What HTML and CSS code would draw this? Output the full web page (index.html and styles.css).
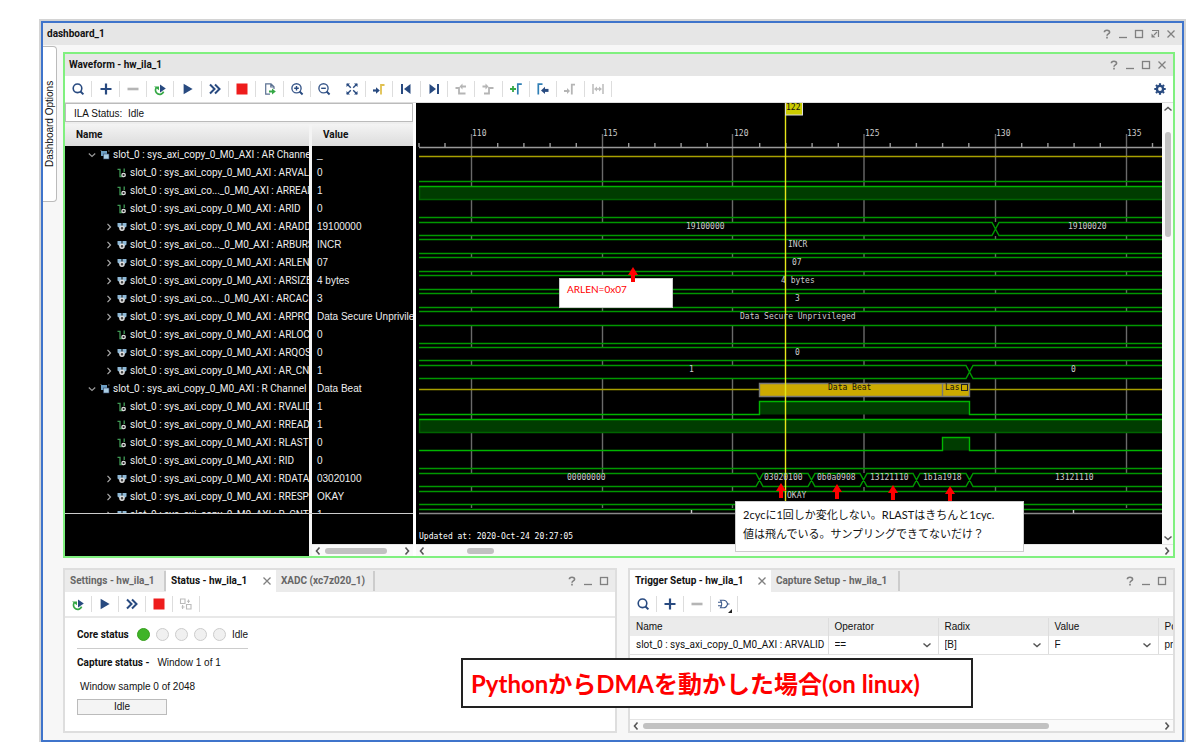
FILE: index.html
```html
<!DOCTYPE html>
<html lang="en">
<head>
<meta charset="utf-8">
<title>dashboard_1</title>
<link rel="stylesheet" href="styles.css">
</head>
<body>
<svg class="defs" aria-hidden="true">
  <symbol id="search" viewBox="0 0 14 14"><circle cx="6.5" cy="6.3" r="4.3" fill="none" stroke="#284a80" stroke-width="1.6"/><path d="M9.5 9.5L12.4 12.4" stroke="#284a80" stroke-width="2"/></symbol>
  <symbol id="plus" viewBox="0 0 14 14"><path d="M7 1.5V12.5M1.500 7H12.5" stroke="#284a80" stroke-width="2.2"/></symbol>
  <symbol id="minus" viewBox="0 0 14 14"><path d="M1.5 7H12.5" stroke="#b5b5b5" stroke-width="2.6"/></symbol>
  <symbol id="rerun" viewBox="0 0 14 14"><path d="M7 2.5V10.5L12.8 6.4z" fill="#284a80"/><path d="M3.4 5.5A4.2 4.2 0 1 0 10.6 9.600" fill="none" stroke="#35a845" stroke-width="1.7"/><path d="M1 4.4H6V8.2z" fill="#35a845"/></symbol>
  <symbol id="play" viewBox="0 0 14 14"><path d="M2.6 1.8V12.2L11.6 7z" fill="#284a80"/></symbol>
  <symbol id="forward" viewBox="0 0 14 14"><path d="M2 2.5L6.5 7L2 11.5M7 2.5L11.5 7L7 11.5" fill="none" stroke="#284a80" stroke-width="2"/></symbol>
  <symbol id="stop" viewBox="0 0 14 14"><rect x="1.5" y="1.5" width="11" height="11" fill="#ee1c1c"/></symbol>
  <symbol id="export" viewBox="0 0 14 14"><path d="M7 12.2H2.7V1.8H8L11 4.8V7M7.8 2V5H11" fill="none" stroke="#5b7192" stroke-width="1.2"/><path d="M6 9.5H9.5" stroke="#35a845" stroke-width="2"/><path d="M9 6.5L12.8 9.5L9 12.5z" fill="#35a845"/></symbol>
  <symbol id="zoomin" viewBox="0 0 14 14"><circle cx="6.5" cy="6.3" r="4.6" fill="none" stroke="#3c5a8c" stroke-width="1.4"/><path d="M9.6 9.5L12.6 12.5" stroke="#284a80" stroke-width="1.9"/><path d="M4.2 6.3H8.8M6.5 4V8.6" stroke="#284a80" stroke-width="1.4"/></symbol>
  <symbol id="zoomout" viewBox="0 0 14 14"><circle cx="6.5" cy="6.3" r="4.6" fill="none" stroke="#3c5a8c" stroke-width="1.4"/><path d="M9.6 9.5L12.6 12.5" stroke="#284a80" stroke-width="1.9"/><path d="M4.2 6.3H8.8" stroke="#284a80" stroke-width="1.4"/></symbol>
  <symbol id="fit" viewBox="0 0 14 14"><path d="M1.5 5V1.5H5zM9 1.5H12.5V5zM1.5 9V12.5H5zM12.5 9V12.5H9z" fill="#284a80"/><path d="M2 2L5.8 5.8M12 2L8.2 5.8M2 12L5.8 8.2M12 12L8.2 8.2" stroke="#284a80" stroke-width="1.4"/></symbol>
  <symbol id="gocursor" viewBox="0 0 14 14"><path d="M1 8.5H4.5" stroke="#284a80" stroke-width="2.2"/><path d="M4 5.2L7.8 8.5L4 11.8z" fill="#284a80"/><path d="M9 12.5V3H12.5" fill="none" stroke="#e0c04f" stroke-width="1.8"/></symbol>
  <symbol id="first" viewBox="0 0 14 14"><path d="M3 2V12" stroke="#284a80" stroke-width="2"/><path d="M11.500 2V12L5 7z" fill="#284a80"/></symbol>
  <symbol id="last" viewBox="0 0 14 14"><path d="M11 2V12" stroke="#284a80" stroke-width="2"/><path d="M2.500 2V12L9 7z" fill="#284a80"/></symbol>
  <symbol id="prevedge" viewBox="0 0 14 14"><path d="M1.5 6H5V11.5H11.5M7.5 4.5H12" fill="none" stroke="#b5b5b5" stroke-width="1.8"/><path d="M8.5 1.5V7.5L5.5 4.5z" fill="#b5b5b5"/></symbol>
  <symbol id="nextedge" viewBox="0 0 14 14"><path d="M3 11.5H8V6H12.5M1.5 4.5H5" fill="none" stroke="#b5b5b5" stroke-width="1.8"/><path d="M4.5 1.5V7.5L7.5 4.5z" fill="#b5b5b5"/></symbol>
  <symbol id="addmark" viewBox="0 0 14 14"><path d="M4 4V10M1 7H7" stroke="#35a845" stroke-width="1.8"/><path d="M8.8 12.5V2.2H12.8" fill="none" stroke="#2f7fb5" stroke-width="1.7"/></symbol>
  <symbol id="markback" viewBox="0 0 14 14"><path d="M2.3 12.5V2.2H6.5" fill="none" stroke="#2f7fb5" stroke-width="1.7"/><path d="M8.5 8.4H12.5" stroke="#284a80" stroke-width="3"/><path d="M9 4.8V12L5 8.4z" fill="#284a80"/></symbol>
  <symbol id="markfwd" viewBox="0 0 14 14"><path d="M1 9H4.5M8.8 12.5V2.7H12" fill="none" stroke="#b5b5b5" stroke-width="1.8"/><path d="M4 6V12L7 9z" fill="#b5b5b5"/></symbol>
  <symbol id="span" viewBox="0 0 14 14"><path d="M2 2V12M12 2V12M4 7H10" stroke="#bcbcbc" stroke-width="1.5"/><path d="M3 7L6 4.5V9.5zM11 7L8 4.5V9.5z" fill="#bcbcbc"/></symbol>
  <symbol id="gear" viewBox="0 0 14 14"><circle cx="7" cy="7" r="3.1" fill="none" stroke="#284a80" stroke-width="2.4"/><path d="M7 1.3V3M7 11V12.7M1.3 7H3M11 7H12.7M3 3L4.2 4.2M9.8 9.8L11 11M3 11L4.2 9.8M9.8 4.2L11 3" stroke="#284a80" stroke-width="2.2"/></symbol>
  <symbol id="swap" viewBox="0 0 14 14"><path d="M1.5 2H6V6.5H1.5zM7.5 7.5H12V12H7.5zM8 4.2H11M2.5 10H5.5M3.6 8V12M9.5 2.5V6" fill="none" stroke="#bbb" stroke-width="1.1"/></symbol>
  <symbol id="gate" viewBox="0 0 14 14"><path d="M3.5 3.2H6.5C9 3.2 10 5 10.6 7C10 9 9 10.8 6.5 10.8H3.5C5 8.5 5 5.5 3.5 3.2zM1 5.2H4M1 8.8H4M10.6 7H12.5" fill="none" stroke="#3c5a8c" stroke-width="1.1"/></symbol>
  <symbol id="help" viewBox="0 0 10 10"><path d="M2.4 3.3C2.4 .6 7.6 .6 7.6 3.2C7.6 5 5 4.8 5 6.7M5 7.8V9.4" fill="none" stroke="#808080" stroke-width="1.6"/></symbol>
  <symbol id="min" viewBox="0 0 10 10"><path d="M1 8.5H9" stroke="#808080" stroke-width="1.3"/></symbol>
  <symbol id="max" viewBox="0 0 10 10"><rect x="1.5" y="1.5" width="7" height="7" fill="none" stroke="#808080" stroke-width="1.3"/></symbol>
  <symbol id="float" viewBox="0 0 10 10"><path d="M2 1.5H8.5V8M7 3L4 6" fill="none" stroke="#808080" stroke-width="1.2"/><path d="M1.5 4.5V8.5H5.5z" fill="#808080"/></symbol>
  <symbol id="close" viewBox="0 0 10 10"><path d="M1.5 1.5L8.5 8.5M8.5 1.5L1.5 8.5" stroke="#808080" stroke-width="1.3"/></symbol>
  <symbol id="left" viewBox="0 0 10 10"><path d="M6.5 1.5L3.5 5L6.5 8.5" fill="none" stroke="#555" stroke-width="1.6"/></symbol>
  <symbol id="right" viewBox="0 0 10 10"><path d="M3.5 1.5L6.5 5L3.5 8.5" fill="none" stroke="#555" stroke-width="1.6"/></symbol>
  <symbol id="up" viewBox="0 0 10 10"><path d="M1.5 6.5L5 3.5L8.5 6.5" fill="none" stroke="#555" stroke-width="1.5"/></symbol>
  <symbol id="down" viewBox="0 0 10 10"><path d="M1.5 3.5L5 6.5L8.5 3.5" fill="none" stroke="#555" stroke-width="1.5"/></symbol>
  <symbol id="open" viewBox="0 0 10 10"><path d="M1.8 3.5L5 6.5L8.2 3.5" fill="none" stroke="#999" stroke-width="1.2"/></symbol>
  <symbol id="shut" viewBox="0 0 10 10"><path d="M3.5 1.8L6.5 5L3.5 8.2" fill="none" stroke="#aaa" stroke-width="1.2"/></symbol>
  <symbol id="group" viewBox="0 0 10 10"><rect x="1" y="1" width="6" height="5" fill="#6d9fc4"/><rect x="3.500" y="4" width="5.5" height="5" fill="#a9cde4" stroke="#346" stroke-width=".6"/><path d="M0 0H2M8 1H9.5" stroke="#999" stroke-width=".7"/></symbol>
  <symbol id="bit" viewBox="0 0 10 10"><path d="M.5 1.3H3V8.500H5M7.200 .5V4" fill="none" stroke="#3f9a55" stroke-width="1.3"/><circle cx="6.6" cy="7" r="1.7" fill="#222" stroke="#ddd" stroke-width="1.3"/></symbol>
  <symbol id="bus" viewBox="0 0 10 10"><path d="M.5 1H4.500V5L3 6.500L.5 4.500zM5.500 1H9.5V4.500L7 6.500L5.500 5z" fill="#8fb9d6"/><circle cx="5" cy="6.200" r="2" fill="#444" stroke="#ddd" stroke-width="1.5"/></symbol>
</svg>

<main class="dashboard">
  <header class="titlebar main-title">
    <h1>dashboard_1</h1>
    <div class="winbtns"><button aria-label="Help"><svg><use href="#help"/></svg></button><button aria-label="Minimize"><svg><use href="#min"/></svg></button><button aria-label="Maximize"><svg><use href="#max"/></svg></button><button aria-label="Float"><svg><use href="#float"/></svg></button><button aria-label="Close"><svg><use href="#close"/></svg></button></div>
  </header>
  <div class="workspace">
    <button class="side-tab">Dashboard Options</button>
    <div class="panels">
      <section class="panel wave-panel">
        <header class="titlebar">
          <h2>Waveform - hw_ila_1</h2>
          <div class="winbtns"><button aria-label="Help"><svg><use href="#help"/></svg></button><button aria-label="Minimize"><svg><use href="#min"/></svg></button><button aria-label="Maximize"><svg><use href="#max"/></svg></button><button aria-label="Close"><svg><use href="#close"/></svg></button></div>
        </header>
        <div class="toolbar">
          <div class="tools tools-wave">
            <button aria-label="Search"><svg><use href="#search"/></svg></button>
            <button aria-label="Add"><svg><use href="#plus"/></svg></button>
            <button aria-label="Remove"><svg><use href="#minus"/></svg></button>
            <button aria-label="Auto re-trigger"><svg><use href="#rerun"/></svg></button>
            <button aria-label="Run trigger"><svg><use href="#play"/></svg></button>
            <button aria-label="Run immediate"><svg><use href="#forward"/></svg></button>
            <button aria-label="Stop"><svg><use href="#stop"/></svg></button>
            <button aria-label="Export"><svg><use href="#export"/></svg></button>
            <button aria-label="Zoom in"><svg><use href="#zoomin"/></svg></button>
            <button class="nosep" aria-label="Zoom out"><svg><use href="#zoomout"/></svg></button>
            <button aria-label="Zoom fit"><svg><use href="#fit"/></svg></button>
            <button aria-label="Go to cursor"><svg><use href="#gocursor"/></svg></button>
            <button aria-label="First"><svg><use href="#first"/></svg></button>
            <button aria-label="Last"><svg><use href="#last"/></svg></button>
            <button aria-label="Previous transition"><svg><use href="#prevedge"/></svg></button>
            <button aria-label="Next transition"><svg><use href="#nextedge"/></svg></button>
            <button aria-label="Add marker"><svg><use href="#addmark"/></svg></button>
            <button aria-label="Previous marker"><svg><use href="#markback"/></svg></button>
            <button aria-label="Next marker"><svg><use href="#markfwd"/></svg></button>
            <button aria-label="Swap cursors"><svg><use href="#span"/></svg></button>
          </div>
          <button class="gear" aria-label="Settings"><svg><use href="#gear"/></svg></button>
        </div>
        <div class="viewer">
          <div class="signals">
            <div class="ila">ILA Status:&nbsp; Idle</div>
            <div class="tree">
              <table>
                <thead><tr><th class="cn">Name</th><th>Value</th></tr></thead>
                <tbody>
                  <tr><td class="cn l1"><svg><use href="#open"/></svg><svg><use href="#group"/></svg>slot_0 : sys_axi_copy_0_M0_AXI : AR Channel</td><td>_</td></tr>
                  <tr><td class="cn"><svg></svg><svg><use href="#bit"/></svg>slot_0 : sys_axi_copy_0_M0_AXI : ARVALID</td><td>0</td></tr>
                  <tr><td class="cn"><svg></svg><svg><use href="#bit"/></svg>slot_0 : sys_axi_co..._0_M0_AXI : ARREADY</td><td>1</td></tr>
                  <tr><td class="cn"><svg></svg><svg><use href="#bit"/></svg>slot_0 : sys_axi_copy_0_M0_AXI : ARID</td><td>0</td></tr>
                  <tr><td class="cn"><svg><use href="#shut"/></svg><svg><use href="#bus"/></svg>slot_0 : sys_axi_copy_0_M0_AXI : ARADDR</td><td>19100000</td></tr>
                  <tr><td class="cn"><svg><use href="#shut"/></svg><svg><use href="#bus"/></svg>slot_0 : sys_axi_co..._0_M0_AXI : ARBURST</td><td>INCR</td></tr>
                  <tr><td class="cn"><svg><use href="#shut"/></svg><svg><use href="#bus"/></svg>slot_0 : sys_axi_copy_0_M0_AXI : ARLEN</td><td>07</td></tr>
                  <tr><td class="cn"><svg><use href="#shut"/></svg><svg><use href="#bus"/></svg>slot_0 : sys_axi_copy_0_M0_AXI : ARSIZE</td><td>4 bytes</td></tr>
                  <tr><td class="cn"><svg><use href="#shut"/></svg><svg><use href="#bus"/></svg>slot_0 : sys_axi_co..._0_M0_AXI : ARCACHE</td><td>3</td></tr>
                  <tr><td class="cn"><svg><use href="#shut"/></svg><svg><use href="#bus"/></svg>slot_0 : sys_axi_copy_0_M0_AXI : ARPROT</td><td>Data Secure Unprivileged</td></tr>
                  <tr><td class="cn"><svg></svg><svg><use href="#bit"/></svg>slot_0 : sys_axi_copy_0_M0_AXI : ARLOCK</td><td>0</td></tr>
                  <tr><td class="cn"><svg><use href="#shut"/></svg><svg><use href="#bus"/></svg>slot_0 : sys_axi_copy_0_M0_AXI : ARQOS</td><td>0</td></tr>
                  <tr><td class="cn"><svg><use href="#shut"/></svg><svg><use href="#bus"/></svg>slot_0 : sys_axi_copy_0_M0_AXI : AR_CNT</td><td>1</td></tr>
                  <tr><td class="cn l1"><svg><use href="#open"/></svg><svg><use href="#group"/></svg>slot_0 : sys_axi_copy_0_M0_AXI : R Channel</td><td>Data Beat</td></tr>
                  <tr><td class="cn"><svg></svg><svg><use href="#bit"/></svg>slot_0 : sys_axi_copy_0_M0_AXI : RVALID</td><td>1</td></tr>
                  <tr><td class="cn"><svg></svg><svg><use href="#bit"/></svg>slot_0 : sys_axi_copy_0_M0_AXI : RREADY</td><td>1</td></tr>
                  <tr><td class="cn"><svg></svg><svg><use href="#bit"/></svg>slot_0 : sys_axi_copy_0_M0_AXI : RLAST</td><td>0</td></tr>
                  <tr><td class="cn"><svg></svg><svg><use href="#bit"/></svg>slot_0 : sys_axi_copy_0_M0_AXI : RID</td><td>0</td></tr>
                  <tr><td class="cn"><svg><use href="#shut"/></svg><svg><use href="#bus"/></svg>slot_0 : sys_axi_copy_0_M0_AXI : RDATA</td><td>03020100</td></tr>
                  <tr><td class="cn"><svg><use href="#shut"/></svg><svg><use href="#bus"/></svg>slot_0 : sys_axi_copy_0_M0_AXI : RRESP</td><td>OKAY</td></tr>
                  <tr><td class="cn"><svg><use href="#shut"/></svg><svg><use href="#bus"/></svg>slot_0 : sys_axi_copy_0_M0_AXI : R_CNT</td><td>1</td></tr>
                </tbody>
              </table>
            </div>
            <div class="tree-foot">
              <div class="foot-name"></div>
              <div class="foot-value"><div class="hscroll"><svg><use href="#left"/></svg><div class="track"><div class="thumb thumb-value"></div></div><svg><use href="#right"/></svg></div></div>
            </div>
          </div>
          <div class="wave-side">
            <div class="wave-main">
              <div class="wave">
                <svg class="plot" role="img" aria-label="Waveform">
                  <defs>
                    <path id="grid" d="M0 134V222M0 236V239M0 254V257M0 272V275M0 290V293M0 308V311M0 326V347M0 361V365M0 379V473M0 487V491M0 505V508"/>
                    <path id="ticks" d="M26.2 143V147M52.4 143V147M78.6 143V147M104.8 143V147"/>
                    <path id="arrow" d="M0 0L5 8H2V15H-2V8H-5z"/>
                  </defs>
                  <g transform="translate(-416 -103)">
                    <g class="grid"><use href="#grid" x="471.5"/><use href="#grid" x="602.5"/><use href="#grid" x="732.5"/><use href="#grid" x="864"/><use href="#grid" x="995.5"/><use href="#grid" x="1126.5"/></g>
                    <g class="axis"><path d="M419 147.5H4000M419 143V147M445 143V147"/><use href="#ticks" x="471.5"/><use href="#ticks" x="602.5"/><use href="#ticks" x="733.5"/><use href="#ticks" x="864"/><use href="#ticks" x="995.5"/><path d="M1152.5 143V147"/></g>
                    <path class="fill" d="M419 186H4000V200H419zM419 419H4000V433H419zM759.5 401.5H969.5V414.5H759.5zM942.5 437.5H969.5V450.5H942.5z"/>
                    <path class="dim" d="M419.5 187V199.5H4000M419.5 420V432.5H4000"/>
                    <path class="bright" d="M419 186.5H4000M419 419.5H4000M419 414.5H759.5V401.5H969.5V414.5H4000M419 450.5H942.5V437.5H969.5V450.5H4000"/>
                    <path class="line" d="M419 181.5H4000M419 217.5H4000M419 222.5H992L999 235.5H4000M419 235.5H992L999 222.5H4000M419 239.5H4000M419 253.5H4000M419 257.5H4000M419 271.5H4000M419 275.5H4000M419 289.5H4000M419 293.5H4000M419 307.5H4000M419 311.5H4000M419 325.5H4000M419 343.5H4000M419 347.5H4000M419 360.5H4000M419 365.5H966L973 378.5H4000M419 378.5H966L973 365.5H4000M419 468.5H4000M419 491.5H4000M419 504.5H4000M419 509.5H4000"/>
                    <path class="line" d="M419 473.5H756L763 486.5H808L815 473.5H860L867 486.5H913L920 473.5H966L973 486.5H4000M419 486.5H756L763 473.5H808L815 486.5H860L867 473.5H913L920 486.5H966L973 473.5H4000"/>
                    <path class="yellow" d="M419 156.5H4000M419 389.5H4000"/>
                    <path class="beat" d="M759.5 383.5H969.5V396.5H759.5zM942.5 383.5V396.5"/>
                    <path class="cut" d="M419 513.5H4000"/>
                    <path class="cursor" d="M785.5 103V513"/>
                    <rect class="flag" x="785.5" y="96.5" width="17" height="18.5"/>
                    <g class="label">
                      <text class="dark" x="786" y="110">122</text>
                      <text x="472" y="136">110</text><text x="603" y="136">115</text><text x="734" y="136">120</text><text x="865" y="136">125</text><text x="996" y="136">130</text><text x="1127" y="136">135</text>
                      <text x="686" y="229">19100000</text><text x="1068" y="229">19100020</text>
                      <text x="788" y="247">INCR</text><text x="792" y="265">07</text><text x="781" y="283">4 bytes</text><text x="795" y="301">3</text><text x="740" y="319">Data Secure Unprivileged</text><text x="795" y="355">0</text>
                      <text x="689" y="372">1</text><text x="1071" y="372">0</text>
                      <text class="dark" x="828" y="390">Data Beat</text><text class="dark" x="945" y="390">Las</text>
                      <text x="567" y="480">00000000</text><text x="764" y="480">03020100</text><text x="817" y="480">0b0a0908</text><text x="870" y="480">13121110</text><text x="923" y="480">1b1a1918</text><text x="1055" y="480">13121110</text>
                      <text x="787" y="498">OKAY</text>
                      <text class="bold" x="419" y="539">Updated at: 2020-Oct-24 20:27:05</text>
                    </g>
                    <path class="cutmark" d="M691.5 510V513M1073.5 510V513"/>
                    <rect class="more" x="961.5" y="384.5" width="6" height="6"/>
                  </g>
                </svg>
                <p class="note note-arlen">ARLEN=0x07</p>
                <p class="note note-data"><span>2cyc</span>に<span>1</span>回しか変化しない。<span>RLAST</span>はきちんと<span>1cyc.</span><br>値は飛んでいる。サンプリングできてないだけ？</p>
                <svg class="plot arrows" aria-hidden="true"><g transform="translate(-416 -103)"><use href="#arrow" x="633" y="267"/><use href="#arrow" x="781" y="483"/><use href="#arrow" x="837" y="484"/><use href="#arrow" x="893" y="485"/><use href="#arrow" x="950" y="486"/></g></svg>
              </div>
              <div class="vscroll"><svg><use href="#up"/></svg><div class="vtrack"><div class="vthumb"></div></div><svg><use href="#down"/></svg></div>
            </div>
            <div class="hscroll"><svg><use href="#left"/></svg><div class="track"><div class="thumb thumb-wave"></div></div><svg><use href="#right"/></svg></div>
          </div>
        </div>
      </section>

      <div class="lower">
        <section class="panel sub status-panel">
          <header class="tabs">
            <button class="tab tab-settings">Settings - hw_ila_1</button>
            <button class="tab tab-status active">Status - hw_ila_1<svg><use href="#close"/></svg></button>
            <button class="tab tab-xadc">XADC (xc7z020_1)</button>
            <div class="winbtns"><button aria-label="Help"><svg><use href="#help"/></svg></button><button aria-label="Minimize"><svg><use href="#min"/></svg></button><button aria-label="Maximize"><svg><use href="#max"/></svg></button></div>
          </header>
          <div class="toolbar">
            <div class="tools">
              <button aria-label="Auto re-trigger"><svg><use href="#rerun"/></svg></button>
              <button aria-label="Run trigger"><svg><use href="#play"/></svg></button>
              <button aria-label="Run immediate"><svg><use href="#forward"/></svg></button>
              <button aria-label="Stop"><svg><use href="#stop"/></svg></button>
              <button aria-label="Export data"><svg><use href="#swap"/></svg></button>
            </div>
          </div>
          <div class="status">
            <div class="core"><b>Core status</b><i class="lamp on"></i><i class="lamp"></i><i class="lamp"></i><i class="lamp"></i><i class="lamp"></i><span>Idle</span></div>
            <div class="capture"><b>Capture status -</b><span>Window 1 of 1</span></div>
            <div class="sample">Window sample 0 of 2048</div>
            <div class="progress">Idle</div>
          </div>
        </section>
        <section class="panel sub trigger-panel">
          <header class="tabs">
            <button class="tab tab-trigger active">Trigger Setup - hw_ila_1<svg><use href="#close"/></svg></button>
            <button class="tab tab-capture">Capture Setup - hw_ila_1</button>
            <div class="winbtns"><button aria-label="Help"><svg><use href="#help"/></svg></button><button aria-label="Minimize"><svg><use href="#min"/></svg></button><button aria-label="Maximize"><svg><use href="#max"/></svg></button></div>
          </header>
          <div class="toolbar">
            <div class="tools">
              <button aria-label="Search"><svg><use href="#search"/></svg></button>
              <button aria-label="Add probe"><svg><use href="#plus"/></svg></button>
              <button aria-label="Remove probe"><svg><use href="#minus"/></svg></button>
              <button class="gate" aria-label="Trigger condition"><svg><use href="#gate"/></svg></button>
            </div>
          </div>
          <div class="probe-wrap">
            <table class="probes">
              <thead><tr><th class="pn">Name</th><th>Operator</th><th>Radix</th><th>Value</th><th class="pp">Port</th></tr></thead>
              <tbody><tr>
                <td class="pn sig">slot_0 : sys_axi_copy_0_M0_AXI : ARVALID</td>
                <td><div class="pick"><select aria-label="Operator"><option>==</option></select><svg><use href="#down"/></svg></div></td>
                <td><div class="pick"><select aria-label="Radix"><option>[B]</option></select><svg><use href="#down"/></svg></div></td>
                <td><div class="pick"><select aria-label="Value"><option>F</option></select><svg><use href="#down"/></svg></div></td>
                <td class="pp">probe</td>
              </tr></tbody>
            </table>
          </div>
          <div class="hscroll"><svg><use href="#left"/></svg><div class="track"><div class="thumb thumb-probe"></div></div><svg><use href="#right"/></svg></div>
        </section>
      </div>
    </div>
  </div>
  <p class="headline"><span>Python</span>から<span>DMA</span>を動かした場合<span>(on linux)</span></p>
</main>
</body>
</html>
```
FILE: styles.css
```css
* { box-sizing: border-box; }
body { margin: 0; padding: 21px 16px 0 41px; background: #fff; color: #111; font: 10px/14px "Liberation Sans", Arial, sans-serif; }
button, select { margin: 0; padding: 0; border: 0; background: none; font: inherit; color: inherit; }
h1, h2, p { margin: 0; font-size: inherit; }
h1, h2, b, th { font-family: Roboto, "Liberation Sans", sans-serif; }
svg { flex: none; width: 10px; height: 10px; display: block; }
.defs { position: absolute; width: 0; height: 0; }

.dashboard { position: relative; border: 2px solid #3f74cb; background: #f7f7f7; box-shadow: 0 0 0 2px #d4d4d4; }
.titlebar { display: flex; align-items: center; justify-content: space-between; height: 22px; padding: 0 6px 0 4px; background: #e6e6e6; }
.winbtns { display: flex; gap: 6px; margin-left: auto; }
.winbtns button { display: flex; }
.workspace { display: flex; align-items: flex-start; padding: 0 7px 7px 0; }
.side-tab { flex: none; width: 14px; height: 156px; margin-top: 1px; border: 1px solid #bbb; border-right: 0; border-radius: 4px 0 0 4px; background: #fff; writing-mode: vertical-rl; transform: rotate(180deg); }
.panels { flex: 1; min-width: 0; display: flex; flex-direction: column; gap: 10px; padding: 7px 0 0 6px; }
.panel { border: 2px solid #dedede; background: #fff; }
.wave-panel { border-color: #80f07f; }

.toolbar { display: flex; align-items: center; justify-content: space-between; height: 27px; border-bottom: 1px solid #ddd; }
.tools { display: grid; grid-auto-flow: column; grid-auto-columns: 27px; }
.tools-wave { width: 547px; grid-auto-columns: 1fr; }
.tools button { display: flex; justify-content: center; align-items: center; height: 16px; border-right: 1px solid #ddd; }
.tools .nosep { border-color: transparent; }
.tools svg, .gear svg { width: 14px; height: 14px; }
.gear { margin-right: 6px; }
.gate { position: relative; }
.gate::after { content: ""; position: absolute; right: 5px; bottom: -1px; border: 2px solid #222; border-top-color: transparent; border-left-color: transparent; }

.viewer { display: flex; gap: 3px; height: 453px; }
.signals { flex: none; width: 348px; display: flex; flex-direction: column; }
.ila { height: 19px; padding: 0 8px; border: 1px solid #bbb; line-height: 19px; }
.tree { height: 392px; overflow: hidden; border-top: 2px solid #eee; border-bottom: 1px solid #ccc; background: #000; }
.tree table { width: 100%; table-layout: fixed; border-collapse: separate; border-spacing: 0; }
.tree th { height: 22px; padding: 0 11px; text-align: left; background: linear-gradient(#f4f4f4, #dcdcdc); }
.tree td { height: 18px; padding: 0 0 0 5px; overflow: hidden; white-space: nowrap; color: #eee; line-height: 18px; }
.tree .cn { width: 247px; border-right: 3px solid #f4f4f4; }
.tree td.cn { padding-left: 39px; font-family: Roboto, "Liberation Sans", sans-serif; }
.tree td.l1 { padding-left: 22px; }
.tree td svg { display: inline-block; vertical-align: middle; margin-right: 3px; }
.tree-foot { flex: 1; display: flex; }
.foot-name { width: 247px; background: #000; border-right: 3px solid #f4f4f4; }
.foot-value { flex: 1; display: flex; flex-direction: column; justify-content: flex-end; background: #000; }

.hscroll { display: flex; align-items: center; height: 12px; padding: 0 1px; background: #fafafa; border-top: 1px solid #e4e4e4; }
.track { flex: 1; }
.thumb { height: 6px; border-radius: 3px; background: #c1c1c1; }
.thumb-value { width: 62px; margin-left: 2px; }
.thumb-wave { width: 27px; margin-left: 40px; }
.thumb-probe { width: 78%; margin-left: 2px; }
.wave-side { flex: 1; min-width: 0; display: flex; flex-direction: column; }
.wave-main { flex: 1; display: flex; min-height: 0; }
.wave { position: relative; flex: 1; min-width: 0; background: #000; }
.vscroll { width: 11px; display: flex; flex-direction: column; align-items: center; padding: 1px 0; background: #fafafa; }
.vtrack { flex: 1; padding-top: 18px; }
.vthumb { width: 6px; height: 105px; border-radius: 3px; background: #c1c1c1; }

.plot { position: absolute; inset: 0; width: 100%; height: 100%; overflow: hidden; }
.plot path { fill: none; stroke-width: 1.4; }
.grid { stroke: #6a6a6a; }
.axis { stroke: #999; }
.plot .fill { fill: #003c00; }
.dim { stroke: #006400; }
.bright { stroke: #00b400; }
.line { stroke: #009800; }
.yellow { stroke: #a8a000; }
.plot .beat { fill: #ccaa00; stroke: #777; }
.cut { stroke: #888; }
.cutmark { stroke: #ccc; }
.cursor { stroke: #e6e619; }
.flag { fill: #cccc00; stroke: #ddd; }
.more { fill: none; stroke: #222; }
.label { fill: #ccc; font: 8px "DejaVu Sans Mono", monospace; }
.label .dark { fill: #111; }
.label .bold { fill: #fff; }
.plot #arrow { fill: #f00; }

.note { position: absolute; background: #fff; border: 1px solid #ccc; white-space: nowrap; }
.note-arlen { left: 143px; top: 175px; width: 114px; height: 30px; padding: 2px 7px; color: #f00; font: 10px/16px Lato, sans-serif; }
.note-data { left: 319px; top: 398px; width: 289px; height: 51px; padding: 3px 7px; font: 11px/19px "Noto Sans CJK JP", sans-serif; z-index: 1; }
.note-data span { font: 11px/19px Lato, sans-serif; }

.lower { display: flex; gap: 11px; }
.sub { flex: 554 1 0; min-width: 0; height: 165px; display: flex; flex-direction: column; }
.trigger-panel { flex-grow: 547; }
.sub .toolbar { height: 26px; flex: none; border-bottom: 2px solid #e8e8e8; }
.tabs { display: flex; align-items: center; height: 22px; flex: none; background: #ebebeb; padding-right: 6px; }
.tab { display: flex; align-items: center; justify-content: space-between; height: 20px; padding: 0 4px 0 5px; border-right: 2px solid #ccc; font-family: Roboto, "Liberation Sans", sans-serif; font-weight: bold; color: #666; white-space: nowrap; }
.tab.active { height: 22px; background: #fff; color: #111; border: 0; }
.tab-settings { width: 101px; }
.tab-status { width: 110px; }
.tab-xadc { width: 99px; }
.tab-trigger { width: 141px; }
.tab-capture { width: 129px; }
.status { padding: 9px 12px; }
.status b { margin-right: 8px; }
.core { display: flex; align-items: center; gap: 6px; width: 171px; height: 22px; padding-bottom: 6px; border-bottom: 1px solid #ccc; white-space: nowrap; }
.core b { width: 55px; margin: 0; }
.lamp { flex: none; width: 13px; height: 13px; border: 1px solid #ccc; border-radius: 50%; background: #f0f0f0; }
.lamp.on { border-color: #37a01f; background: #3fb428; }
.capture { margin-top: 7px; }
.sample { margin-top: 10px; padding-left: 3px; }
.progress { width: 90px; height: 16px; margin-top: 5px; border: 1px solid #bbb; background: #f4f4f4; text-align: center; }
.probe-wrap { flex: 1; overflow: hidden; }
.probes { width: 100%; min-width: 543px; table-layout: fixed; border-collapse: collapse; }
.probes th { height: 18px; padding: 0 6px; border-left: 1px solid #ddd; background: #ebebeb; font-family: inherit; font-weight: normal; text-align: left; }
.probes td { height: 18px; padding: 0 6px; border-left: 1px solid #ddd; border-bottom: 1px solid #e0e0e0; white-space: nowrap; overflow: hidden; }
.probes th, .probes td { width: 110px; }
.probes .pn { border-left: 0; width: auto; }
.probes .sig { font-family: Roboto, "Liberation Sans", sans-serif; }
.probes .pp { width: 15px; padding-right: 0; white-space: nowrap; overflow: hidden; }
.pick { display: flex; align-items: center; }
.pick select { flex: 1; min-width: 0; appearance: none; }
.headline { position: absolute; left: 418px; top: 635px; width: 512px; height: 50px; padding: 0 8px; border: 2px solid #222; background: #fff; color: #f00; white-space: nowrap; font: bold 24px/46px "Noto Sans CJK JP", sans-serif; }
.headline span { font: bold 24px/46px Lato, sans-serif; }
```
